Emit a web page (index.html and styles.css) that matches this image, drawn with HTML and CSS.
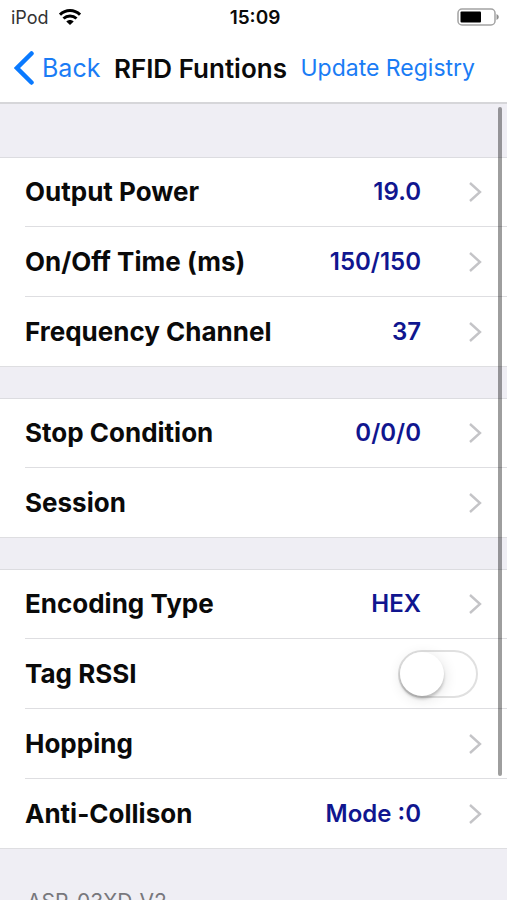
FILE: index.html
```html
<!DOCTYPE html>
<html lang="en">
<head>
<meta charset="utf-8">
<meta name="viewport" content="width=device-width, initial-scale=1">
<title>RFID Funtions</title>
<link rel="stylesheet" href="styles.css">
</head>
<body>
<svg class="sprite" aria-hidden="true">
  <symbol id="chevron" viewBox="0 0 14 22"><path d="M2 2l10 9-10 9" fill="none" stroke="#c4c4c7" stroke-width="2.4"/></symbol>
</svg>
<div class="app">
  <header class="top">
    <div class="status">
      <div class="carrier">
        <span>iPod</span>
        <svg class="wifi" viewBox="0 0 22 16" aria-hidden="true">
          <g fill="none" stroke="#000" stroke-width="3">
            <path d="M1 5.700C6.700 .2 15.300 .2 21 5.700"/>
            <path d="M4.500 9.500C8.200 6 13.800 6 17.500 9.500"/>
          </g>
          <path d="M11 16L7.300 12.500C9.400 10.500 12.600 10.500 14.700 12.500Z"/>
        </svg>
      </div>
      <time class="clock">15:09</time>
      <svg class="battery" viewBox="0 0 42 18" aria-hidden="true">
        <rect x="1" y="1" width="37" height="16" rx="4" fill="#fff" stroke="#a3a3a3" stroke-width="1.500"/>
        <rect x="3.500" y="3.500" width="20.500" height="11" rx="1"/>
        <path d="M39.500 6c3 1.500 3 4.500 0 6z" fill="#8e8e8e"/>
      </svg>
    </div>
    <nav class="nav">
      <a class="back" href="#">
        <svg viewBox="0 0 20 34" aria-hidden="true"><path d="M17.500 2.500L3 17l14.500 14.500" fill="none" stroke="#0a7aff" stroke-width="4.500" stroke-linecap="round"/></svg>
        <span>Back</span>
      </a>
      <h1>RFID Funtions</h1>
      <button class="update" type="button">Update Registry</button>
    </nav>
  </header>
  <div class="body">
    <main class="content">
      <section class="group">
        <a class="row" href="#"><span class="name">Output Power</span><span class="value">19.0</span><svg class="chev"><use href="#chevron"/></svg></a>
        <a class="row" href="#"><span class="name">On/Off Time (ms)</span><span class="value">150/150</span><svg class="chev"><use href="#chevron"/></svg></a>
        <a class="row" href="#"><span class="name">Frequency Channel</span><span class="value">37</span><svg class="chev"><use href="#chevron"/></svg></a>
      </section>
      <section class="group">
        <a class="row" href="#"><span class="name">Stop Condition</span><span class="value">0/0/0</span><svg class="chev"><use href="#chevron"/></svg></a>
        <a class="row" href="#"><span class="name">Session</span><svg class="chev"><use href="#chevron"/></svg></a>
      </section>
      <section class="group">
        <a class="row" href="#"><span class="name">Encoding Type</span><span class="value">HEX</span><svg class="chev"><use href="#chevron"/></svg></a>
        <div class="row"><label class="name" for="rssi">Tag RSSI</label><input class="switch" id="rssi" type="checkbox"></div>
        <a class="row" href="#"><span class="name">Hopping</span><svg class="chev"><use href="#chevron"/></svg></a>
        <a class="row" href="#"><span class="name">Anti-Collison</span><span class="value">Mode :0</span><svg class="chev"><use href="#chevron"/></svg></a>
      </section>
      <p class="version">ASR_03XD_V2</p>
    </main>
    <div class="scroll-thumb"></div>
  </div>
</div>
</body>
</html>
```

FILE: styles.css
```css
* { box-sizing: border-box; }

body {
  margin: 0;
  background: #efeef4;
  color: #0a0a0a;
  font-family: Inter, "Liberation Sans", sans-serif;
}

a { color: inherit; text-decoration: none; }

.sprite { display: none; }

.app {
  display: flex;
  flex-direction: column;
  height: 100vh;
}

.top {
  background: #fff;
  border-bottom: 2px solid #d6d6d9;
}

.status {
  display: grid;
  grid-template-columns: 1fr auto 1fr;
  align-items: center;
  height: 34px;
  padding: 0 8px 0 11px;
}

.carrier {
  display: flex;
  align-items: center;
  gap: 10px;
  font-size: 18px;
  color: #333;
}

.wifi { width: 22px; height: 16px; }

.clock { font-size: 19px; font-weight: 600; }

.battery { width: 42px; height: 18px; justify-self: end; }

.nav {
  display: flex;
  align-items: center;
  height: 68px;
  padding: 0 32px 0 14px;
  white-space: nowrap;
}

.back {
  display: flex;
  align-items: center;
  gap: 8px;
  color: #1a7cf5;
  font-size: 25px;
}

.back svg { width: 20px; height: 34px; }

h1 {
  margin: 0 auto;
  font-size: 26px;
  font-weight: 600;
}

.update {
  padding: 0;
  border: 0;
  background: none;
  color: #1a7cf5;
  font: inherit;
  font-size: 23px;
}

.body {
  position: relative;
  flex: 1;
  min-height: 0;
}

.content {
  display: flex;
  flex-direction: column;
  gap: 31px;
  height: 100%;
  padding-top: 53px;
  overflow-y: auto;
  scrollbar-width: none;
}

.group {
  flex: none;
  background: #fff;
  box-shadow: inset 0 1px #dcdce0;
}

.row {
  display: flex;
  align-items: center;
  height: 70px;
  margin-left: 25px;
  padding-right: 25px;
  border-bottom: 1px solid #dedee1;
}

.name {
  flex: 1;
  font-size: 26px;
  font-weight: 700;
}

.value {
  color: #10168f;
  font-size: 24px;
  font-weight: 600;
}

.chev {
  width: 14px;
  height: 22px;
  margin-left: 47px;
}

.group .row:last-child {
  margin-left: 0;
  padding-left: 25px;
}

.switch {
  appearance: none;
  display: flex;
  width: 80px;
  height: 48px;
  margin: 0 4px 0 0;
  border: 2px solid #e0e0e0;
  border-radius: 24px;
  background: #fff;
}

.switch::before {
  content: "";
  width: 44px;
  height: 44px;
  border-radius: 50%;
  background: #fff;
  box-shadow: 0 3px 3px rgba(0, 0, 0, .2), 1px 3px 14px rgba(0, 0, 0, .12);
}

.switch:checked { background: #4cd964; justify-content: flex-end; }

.version {
  margin: 10px 0 0;
  padding: 0 27px 30px;
  color: #77777c;
  font-size: 21px;
  line-height: 24px;
}

.scroll-thumb {
  position: absolute;
  top: 3px;
  right: 5px;
  width: 4px;
  height: 84%;
  border-radius: 2px;
  background: rgba(0, 0, 0, .38);
}
```
